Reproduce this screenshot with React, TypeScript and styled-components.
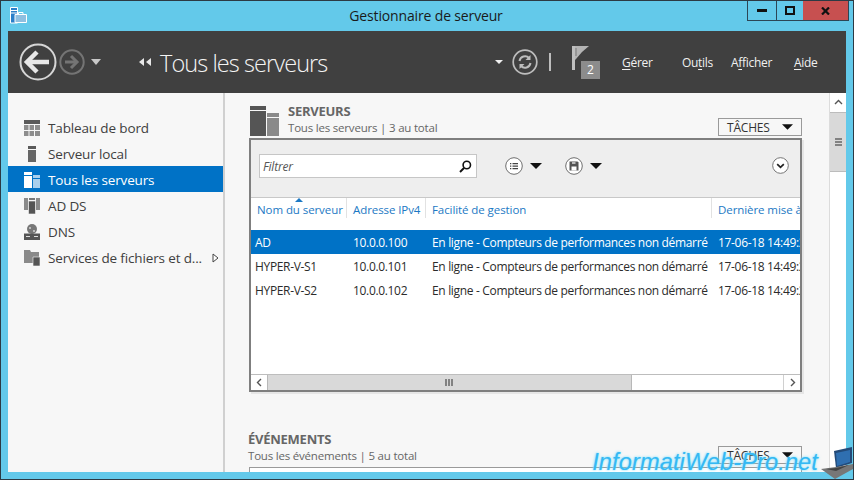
import React from 'react';
import styled, { createGlobalStyle } from 'styled-components';

const Global = createGlobalStyle`
  html, body { margin: 0; padding: 0; background: #63c9ea; }
  body { font-family: "Open Sans", "Noto Sans", sans-serif; overflow: hidden; }
  * { box-sizing: border-box; }
`;

const Win = styled.div`
  position: relative; width: 854px; height: 480px; overflow: hidden;
  display: flex; flex-direction: column;
  background: #63c9ea;
  border: 1px solid #2c3a44;
`;
const TitleBar = styled.div`
  height: 29px; flex: none; display: grid; grid-template-columns: 1fr auto 1fr; align-items: start;
`;
const AppIcon = styled.div` padding: 6px 0 0 9px; display: flex; `;
const TitleText = styled.div`
  font-size: 14px; line-height: 29px; color: #1a1a1a; letter-spacing: -0.15px; margin-left: -2px;
`;
const WinButtons = styled.div`
  justify-self: end; display: flex; height: 21px; margin-top: -1px; margin-right: 4px;
  border: 1px solid #2c4656;
`;
const WinBtn = styled.div<{ $w: number; $red?: boolean }>`
  width: ${p => p.$w}px; display: flex; align-items: center; justify-content: center;
  background: ${p => (p.$red ? '#c75050' : 'transparent')};
  border-left: ${p => (p.$red ? 'none' : '1px solid #2c4656')};
  &:first-child { border-left: none; }
`;
const Frame = styled.div`
  flex: 1; min-height: 0; margin: 1px 7px 7px 7px; display: flex; flex-direction: column;
`;
const Header = styled.div`
  height: 62px; flex: none; background: #404040; display: flex; align-items: center; color: #f0f0f0;
`;
const NavIcons = styled.div` display: flex; align-items: center; margin-left: 11px; width: 120px; `;
const Crumb = styled.div` display: flex; align-items: center; gap: 8px; flex: 1; `;
const CrumbText = styled.div`
  font-size: 23.5px; font-weight: 300; color: #f4f4f4; letter-spacing: -0.92px; line-height: 30px; margin-top: 2px;
`;
const Tools = styled.div` display: flex; align-items: center; margin-right: 28px; `;
const DropCaret = styled.span` display: flex; margin-right: 9px; `;
const Sep = styled.div` width: 2px; height: 18px; background: #bdbdbd; margin: 0 21px 0 11px; `;
const FlagWrap = styled.div` position: relative; width: 29px; height: 33px; margin-right: 21px; `;
const FlagSvg = styled.svg` position: absolute; left: 0; top: 0; `;
const Badge = styled.div`
  position: absolute; left: 9px; top: 15px; width: 19px; height: 18px; background: #8c8c8c;
  color: #fff; font-size: 12px; line-height: 18px; text-align: center;
`;
const MenuItem = styled.div<{ $w: number }>`
  width: ${p => p.$w}px; font-size: 12px; color: #f0f0f0; letter-spacing: -0.3px; u { text-underline-offset: 2px; }
`;
const Body = styled.div` flex: 1; min-height: 0; display: flex; background: #f7f7f7; `;
const Sidebar = styled.div`
  width: 217px; flex: none; padding-top: 21px; border-right: 2px solid #d0d0d0;
  display: flex; flex-direction: column;
`;
const NavRow = styled.div<{ $sel?: boolean }>`
  height: 26px; display: flex; align-items: center; padding: 1px 0 0 16px; gap: 8px;
  font-size: 13.5px; letter-spacing: -0.14px;
  color: ${p => (p.$sel ? '#fff' : '#404040')};
  background: ${p => (p.$sel ? '#0072c6' : 'transparent')};
`;
const NavIconBox = styled.div` width: 16px; height: 16px; display: flex; `;
const RowArrow = styled.div` margin-left: auto; margin-right: 4px; display: flex; `;
const Main = styled.div`
  flex: 1; min-width: 0; overflow: hidden; padding: 11px 27px 0 24px;
`;
const SectionHead = styled.div`
  display: flex; align-items: flex-end; height: 32px; padding-left: 1px; margin-bottom: 2px;
`;
const SectionIcon = styled.div` width: 29px; height: 30px; margin-right: 9px; display: flex; `;
const SectionText = styled.div` flex: 1; display: flex; flex-direction: column; `;
const SectionTitle = styled.div`
  font-size: 13px; font-weight: 700; color: #666; line-height: 16px; letter-spacing: -0.25px;
`;
const SectionSub = styled.div`
  font-size: 11.5px; color: #666; line-height: 17px; letter-spacing: -0.2px;
`;
const TasksBtn = styled.div`
  width: 84px; height: 18px; border: 1px solid #9a9a9a; background: #f7f7f7; display: flex; align-items: center;
  justify-content: space-between; padding: 0 8px; font-size: 12px; color: #333; letter-spacing: -0.2px;
`;
const Panel = styled.div`
  height: 254px; border: 2px solid #7f7f7f; background: #fff;
  display: flex; flex-direction: column; box-shadow: 2px 2px 0 #e6e6e6;
`;
const Toolbar = styled.div`
  height: 58px; flex: none; background: #eeeeee; border-bottom: 1px solid #c8c8c8; display: flex; align-items: center;
  padding: 0 11px 6px 8px;
`;
const Filter = styled.div`
  width: 218px; height: 24px; background: #fff; border: 1px solid #c6c6c6; display: flex; align-items: center;
  justify-content: space-between; padding: 1px 4px 0 3px; margin-right: 28px;
  font-size: 12px; font-style: italic; color: #555; letter-spacing: -0.2px;
`;
const ToolGroup = styled.div` display: flex; align-items: center; gap: 7px; margin-right: 23px; `;
const ToolEnd = styled.div` margin-left: auto; display: flex; `;
const Grid = styled.div` display: grid; grid-template-columns: 96px 79px 286px 1fr; `;
const HeadRow = styled(Grid)`
  height: 30px; position: relative; flex: none; overflow: hidden;
`;
const HeadCell = styled.div`
  padding: 5px 0 0 6px; font-size: 11.5px; line-height: 13px; color: #1c79c4; white-space: nowrap; overflow: hidden;
  letter-spacing: -0.08px; border-right: 1px solid #e2e2e2; height: 20px;
  &:first-child { padding-left: 4px; }
  &:last-child { border-right: none; }
`;
const SortMark = styled.div`
  position: absolute; left: 44px; top: 0; width: 0; height: 0;
  border-left: 4px solid transparent; border-right: 4px solid transparent; border-bottom: 4px solid #1c79c4;
`;
const Rows = styled.div` flex: 1; padding-top: 2px; min-height: 0; `;
const DataRow = styled(Grid)<{ $sel?: boolean }>`
  height: 24px; align-items: center; font-size: 12px; letter-spacing: -0.33px; white-space: nowrap;
  color: ${p => (p.$sel ? '#fff' : '#2b2b2b')};
  background: ${p => (p.$sel ? '#0072c6' : 'transparent')};
`;
const DataCell = styled.div<{ $first?: boolean }>`
  padding-left: ${p => (p.$first ? 4 : 6)}px; overflow: hidden;
`;
const HScroll = styled.div`
  height: 16px; flex: none; display: flex; border-top: 1px solid #bdbdbd; background: #fff;
`;
const ScrollBtn = styled.div`
  width: 16px; display: flex; align-items: center; justify-content: center; flex: none;
`;
const HThumb = styled.div`
  width: 365px; background: #d9d9d9; border-left: 1px solid #b8b8b8; border-right: 1px solid #b8b8b8;
  display: flex; align-items: center; justify-content: center;
`;
const HTrack = styled.div` flex: 1; border-right: 1px solid #d0d0d0; `;
const Section2 = styled.div` margin-top: 37px; `;
const SectionHead2 = styled.div` display: flex; align-items: flex-end; height: 35px; margin-left: -1px; `;
const Panel2 = styled.div` height: 60px; border: 1px solid #9a9a9a; background: #fff; margin-top: 3px; `;
const VScroll = styled.div`
  width: 17px; flex: none; background: #fff; border-left: 1px solid #dcdcdc; display: flex; flex-direction: column; padding-top: 2px;
`;
const VBtn = styled.div` height: 15px; display: flex; align-items: center; justify-content: center; `;
const VThumb = styled.div`
  height: 60px; margin-top: 2px; background: #d9d9d9; border-top: 1px solid #bcbcbc; border-bottom: 1px solid #bcbcbc;
  display: flex; align-items: center; justify-content: center;
`;
const Watermark = styled.div`
  position: absolute; right: 35px; bottom: 2px; height: 30px; display: flex; align-items: center;
  font-family: "Liberation Sans", Arial, sans-serif; font-style: italic; font-size: 23.6px; letter-spacing: 0.1px;
  color: #35b8f3; white-space: nowrap;
  text-shadow: 0 0 2px rgba(120,225,255,.9), 0 0 3px rgba(120,225,255,.55);
`;
const Laptop = styled.svg` position: absolute; right: 0; bottom: 0; `;
const NavGlyph = styled.svg<{ $ml?: number }>` flex: none; margin-left: ${p => p.$ml ?? 0}px; `;

const Caret = ({ c = '#111', w = 12, h = 6 }: { c?: string; w?: number; h?: number }) => (
  <svg width={w} height={h} viewBox="0 0 12 6"><path d="M0 0h12L6 6z" fill={c} /></svg>
);

const BackFwd = () => (
  <>
    <NavGlyph width="38" height="38" viewBox="0 0 38 38">
      <circle cx="19" cy="19" r="17.5" fill="none" stroke="#d6d6d6" strokeWidth="2" />
      <path d="M8 19h22" stroke="#e8e8e8" strokeWidth="4.5" />
      <path d="M18 9L8 19l10 10" fill="none" stroke="#e8e8e8" strokeWidth="4.5" />
    </NavGlyph>
    <NavGlyph $ml={2} width="26" height="26" viewBox="0 0 26 26">
      <circle cx="13" cy="13" r="11.7" fill="none" stroke="#747474" strokeWidth="2" />
      <path d="M6 13h12" stroke="#747474" strokeWidth="3" />
      <path d="M12 7l6 6-6 6" fill="none" stroke="#747474" strokeWidth="3" />
    </NavGlyph>
    <NavGlyph $ml={6} width="10" height="6" viewBox="0 0 10 6"><path d="M0 0h10L5 6z" fill="#c8c8c8" /></NavGlyph>
  </>
);

const DblLeft = () => (
  <svg width="13" height="8" viewBox="0 0 13 8"><path d="M5 0v8L0 4zM12 0v8L7 4z" fill="#e8e8e8" /></svg>
);

const Refresh = () => (
  <svg width="26" height="26" viewBox="0 0 26 26">
    <circle cx="13" cy="13" r="11.8" fill="none" stroke="#bdbdbd" strokeWidth="1.7" />
    <path d="M7.5 12a5.6 5.6 0 0 1 9.6-3" fill="none" stroke="#bdbdbd" strokeWidth="2" />
    <path d="M18.5 6v5h-5z" fill="#bdbdbd" />
    <path d="M18.5 14a5.6 5.6 0 0 1-9.6 3" fill="none" stroke="#bdbdbd" strokeWidth="2" />
    <path d="M7.5 20v-5h5z" fill="#bdbdbd" />
  </svg>
);

const Flag = () => (
  <FlagSvg width="18" height="24" viewBox="0 0 18 24">
    <path d="M0 0h3v24H0z" fill="#bfbfbf" />
    <path d="M3 0h14l-7 6-6 7-1 1V0z" fill="#b4b4b4" />
    <path d="M4 2v8" stroke="#6a6a6a" strokeWidth="0.8" />
  </FlagSvg>
);

const Tableau = ({ c = '#5a5a5a' }: { c?: string }) => (
  <svg width="16" height="16" viewBox="0 0 16 16">
    <path d="M0 0h16v4H0z" fill={c} />
    <path d="M0 5h4.5v5H0zM5.5 5h4.5v5H5.5zM11 5h5v5h-5zM0 11h4.5v5H0zM5.5 11h4.5v5H5.5zM11 11h5v5h-5z" fill="#8d8d8d" />
  </svg>
);
const LocalSrv = () => (
  <svg width="16" height="16" viewBox="0 0 16 16">
    <path d="M4 0h8v3H4z" fill="#5a5a5a" /><path d="M4 4h8v12H4z" fill="#666" />
  </svg>
);
const AllSrv = ({ big }: { big?: boolean }) => big ? (
  <svg width="29" height="30" viewBox="0 0 29 30">
    <path d="M0 0h16v4H0z" fill="#555" /><path d="M0 5h16v25H0z" fill="#555" />
    <path d="M17 7h12v4H17z" fill="#8a8a8a" /><path d="M17 12h12v18H17z" fill="#8a8a8a" />
  </svg>
) : (
  <svg width="16" height="16" viewBox="0 0 16 16">
    <path d="M0 0h8v3H0zM0 4h8v12H0z" fill="#fff" />
    <path d="M9 3h7v3H9zM9 7h7v9H9z" fill="#a9cfec" />
  </svg>
);
const AdDs = () => (
  <svg width="16" height="16" viewBox="0 0 16 16">
    <path d="M0 0h4v12H0zM12 0h4v12h-4z" fill="#8a8a8a" />
    <path d="M5 0h6v2H5z" fill="#777" />
    <path d="M4.5 3h7v13h-7z" fill="#555" stroke="#f7f7f7" strokeWidth="0.6" />
  </svg>
);
const Dns = () => (
  <svg width="16" height="16" viewBox="0 0 16 16">
    <circle cx="8" cy="5" r="5" fill="#777" />
    <path d="M5 3h2v2H5zM9 6h2v2H9z" fill="#bbb" />
    <path d="M0 9.5h16V16H0z" fill="#555" />
    <path d="M2 12h4v1H2zM10 12h4v1h-4z" fill="#ddd" />
  </svg>
);
const Files = () => (
  <svg width="16" height="16" viewBox="0 0 16 16">
    <path d="M0 0h6l1 2h8v11H0z" fill="#8a8a8a" />
    <path d="M9 7h7v9H9z" fill="#555" stroke="#f7f7f7" strokeWidth="0.6" />
  </svg>
);

const Circle = ({ children, s = 18 }: { children: React.ReactNode; s?: number }) => (
  <svg width={s} height={s} viewBox="0 0 18 18">
    <circle cx="9" cy="9" r="8.3" fill="#fff" stroke="#6f6f6f" strokeWidth="1" />
    {children}
  </svg>
);

const Chevron = ({ d, c = '#555' }: { d: string; c?: string }) => (
  <svg width="9" height="9" viewBox="0 0 9 9"><path d={d} fill="none" stroke={c} strokeWidth="1.4" /></svg>
);

const rows = [
  ['AD', '10.0.0.100'],
  ['HYPER-V-S1', '10.0.0.101'],
  ['HYPER-V-S2', '10.0.0.102'],
];

export default function App() {
  return (
    <>
      <Global />
      <Win>
        <TitleBar>
          <AppIcon>
            <svg width="17" height="17" viewBox="0 0 17 17">
              <path d="M0.5 0.5h7v15.5h-7z" fill="#2a7fc9" stroke="#fff" />
              <path d="M1 3.5h6M1 6h6" stroke="#fff" />
              <path d="M5 7.5h11.5v8H5z" fill="#8fbfe0" stroke="#fff" />
              <path d="M8.5 7.5V5.5h4.5v2" fill="none" stroke="#fff" />
            </svg>
          </AppIcon>
          <TitleText>Gestionnaire de serveur</TitleText>
          <WinButtons>
            <WinBtn $w={28}><svg width="10" height="3"><rect width="10" height="3" fill="#111" /></svg></WinBtn>
            <WinBtn $w={27}><svg width="10" height="9"><rect x="1" y="1" width="8" height="7" fill="none" stroke="#111" strokeWidth="2" /></svg></WinBtn>
            <WinBtn $w={45} $red><svg width="9" height="8" viewBox="0 0 9 8"><path d="M1 0.5l7 7M8 0.5l-7 7" stroke="#111" strokeWidth="2.2" /></svg></WinBtn>
          </WinButtons>
        </TitleBar>
        <Frame>
          <Header>
            <NavIcons><BackFwd /></NavIcons>
            <Crumb>
              <DblLeft />
              <CrumbText>Tous les serveurs</CrumbText>
            </Crumb>
            <Tools>
              <DropCaret><Caret c="#f0f0f0" w={8} h={4} /></DropCaret>
              <Refresh />
              <Sep />
              <FlagWrap><Flag /><Badge>2</Badge></FlagWrap>
              <MenuItem $w={60}><u>G</u>érer</MenuItem>
              <MenuItem $w={49}>Ou<u>t</u>ils</MenuItem>
              <MenuItem $w={63}>A<u>f</u>ficher</MenuItem>
              <MenuItem $w={24}><u>A</u>ide</MenuItem>
            </Tools>
          </Header>
          <Body>
            <Sidebar>
              <NavRow><NavIconBox><Tableau /></NavIconBox>Tableau de bord</NavRow>
              <NavRow><NavIconBox><LocalSrv /></NavIconBox>Serveur local</NavRow>
              <NavRow $sel><NavIconBox><AllSrv /></NavIconBox>Tous les serveurs</NavRow>
              <NavRow><NavIconBox><AdDs /></NavIconBox>AD DS</NavRow>
              <NavRow><NavIconBox><Dns /></NavIconBox>DNS</NavRow>
              <NavRow>
                <NavIconBox><Files /></NavIconBox>Services de fichiers et d...
                <RowArrow><svg width="7" height="10" viewBox="0 0 7 10"><path d="M1 1l5 4-5 4z" fill="#fff" stroke="#444" /></svg></RowArrow>
              </NavRow>
            </Sidebar>
            <Main>
              <SectionHead>
                <SectionIcon><AllSrv big /></SectionIcon>
                <SectionText>
                  <SectionTitle>SERVEURS</SectionTitle>
                  <SectionSub>Tous les serveurs | 3 au total</SectionSub>
                </SectionText>
                <TasksBtn>TÂCHES<Caret w={11} h={6} /></TasksBtn>
              </SectionHead>
              <Panel>
                <Toolbar>
                  <Filter>
                    Filtrer
                    <svg width="13" height="13" viewBox="0 0 13 13"><circle cx="7.8" cy="5" r="3.7" fill="none" stroke="#111" strokeWidth="1.6" /><path d="M5 8l-4 4" stroke="#111" strokeWidth="2" /></svg>
                  </Filter>
                  <ToolGroup>
                    <Circle><path d="M5 6h1.3v1.3H5zM5 8.5h1.3v1.3H5zM5 11h1.3v1.3H5zM7.5 6H13v1.3H7.5zM7.5 8.5H13v1.3H7.5zM7.5 11H13v1.3H7.5z" fill="#444" /></Circle>
                    <Caret />
                  </ToolGroup>
                  <ToolGroup>
                    <Circle><path d="M4.5 4.5h8l1 1v8h-9z" fill="#555" /><path d="M7 5h3.5v2H7z" fill="#bbb" /><path d="M6.5 9.5h5v4h-5z" fill="#fff" /></Circle>
                    <Caret />
                  </ToolGroup>
                  <ToolEnd>
                    <Circle s={17}><path d="M5.5 7.5L9 11l3.5-3.5" fill="none" stroke="#222" strokeWidth="1.8" /></Circle>
                  </ToolEnd>
                </Toolbar>
                <HeadRow>
                  <SortMark />
                  <HeadCell>Nom du serveur</HeadCell>
                  <HeadCell>Adresse IPv4</HeadCell>
                  <HeadCell>Facilité de gestion</HeadCell>
                  <HeadCell>Dernière mise à jour</HeadCell>
                </HeadRow>
                <Rows>
                  {rows.map((r, i) => (
                    <DataRow key={r[0]} $sel={i === 0}>
                      <DataCell $first>{r[0]}</DataCell>
                      <DataCell>{r[1]}</DataCell>
                      <DataCell>En ligne - Compteurs de performances non démarré</DataCell>
                      <DataCell>17-06-18 14:49:28</DataCell>
                    </DataRow>
                  ))}
                </Rows>
                <HScroll>
                  <ScrollBtn><Chevron d="M6 1L2.5 4.5 6 8" /></ScrollBtn>
                  <HThumb><svg width="9" height="7"><path d="M1 0v7M4 0v7M7 0v7" stroke="#666" strokeWidth="1.5" /></svg></HThumb>
                  <HTrack />
                  <ScrollBtn><Chevron d="M3 1l3.5 3.5L3 8" /></ScrollBtn>
                </HScroll>
              </Panel>
              <Section2>
                <SectionHead2>
                  <SectionText>
                    <SectionTitle>ÉVÉNEMENTS</SectionTitle>
                    <SectionSub>Tous les événements | 5 au total</SectionSub>
                  </SectionText>
                  <TasksBtn>TÂCHES<Caret w={11} h={6} /></TasksBtn>
                </SectionHead2>
                <Panel2 />
              </Section2>
            </Main>
            <VScroll>
              <VBtn><Chevron d="M1 6l3.5-3.5L8 6" /></VBtn>
              <VThumb><svg width="7" height="8"><path d="M0 1h7M0 4h7M0 7h7" stroke="#666" strokeWidth="1.4" /></svg></VThumb>
            </VScroll>
          </Body>
        </Frame>
        <Watermark>InformatiWeb-Pro.net</Watermark>
        <Laptop width="32" height="32" viewBox="0 0 32 32">
          <path d="M13 4l18-4v16l-16 5z" fill="#234a78" />
          <path d="M15 6l14-3v12l-13 4z" fill="#2f6fb0" />
          <path d="M0 22l15-2 17-3v5L14 32z" fill="#777" />
          <path d="M5 22l10-1 13-3-13 6z" fill="#444" />
        </Laptop>
      </Win>
    </>
  );
}
